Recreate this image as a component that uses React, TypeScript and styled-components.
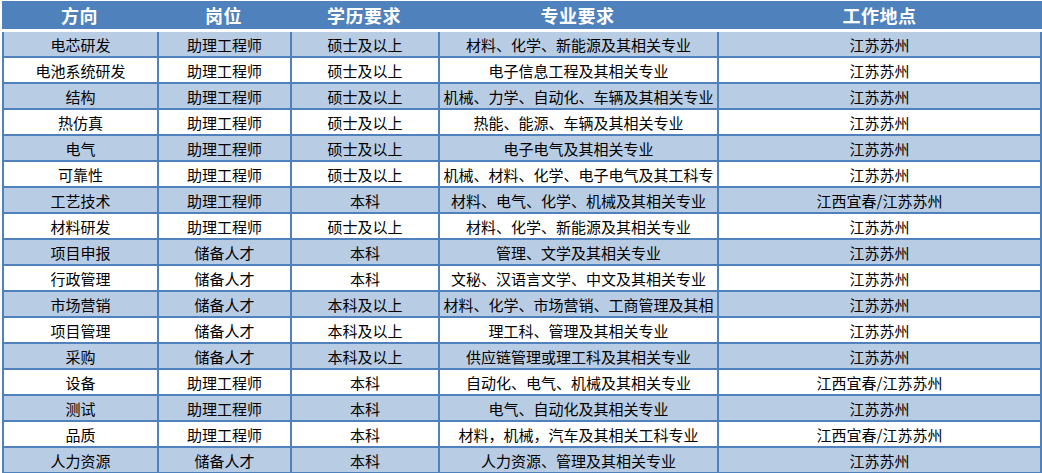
import React from "react";
import styled, { createGlobalStyle } from "styled-components";

const GlobalStyle = createGlobalStyle`
  html, body { margin: 0; padding: 0; background: #ffffff; }
  body { font-family: "Noto Sans CJK SC", "Noto Sans", sans-serif; }
  * { box-sizing: border-box; }
`;

const COLS = "155px 133px 148px 279px 325px";
const BORDER = "#4F81BD";

const Sheet = styled.div`
  width: 1042px;
  padding: 1px 0 0 2px;
  display: flex;
  flex-direction: column;
`;

const HeaderRow = styled.div`
  display: grid;
  grid-template-columns: ${COLS};
  height: 28px;
  background: #4f81bd;
  margin-bottom: 3px;
`;

const HeaderCell = styled.div`
  display: flex;
  align-items: center;
  justify-content: center;
  color: #ffffff;
  font-weight: 700;
  font-size: 18px;
  letter-spacing: 0.5px;
  white-space: nowrap;
`;

const Row = styled.div<{ $shaded: boolean }>`
  display: grid;
  grid-template-columns: ${COLS};
  height: 26px;
  background: ${(p) => (p.$shaded ? "#B8CCE4" : "#ffffff")};
`;

const Cell = styled.div<{ $last?: boolean }>`
  display: flex;
  align-items: center;
  justify-content: center;
  border-left: 2px solid ${BORDER};
  border-bottom: 2px solid ${BORDER};
  border-right: ${(p) => (p.$last ? `2px solid ${BORDER}` : "none")};
  color: #000000;
  font-size: 15px;
  white-space: nowrap;
  overflow: hidden;
  padding-top: 1px;
`;

const headers = ["方向", "岗位", "学历要求", "专业要求", "工作地点"];

const rows: string[][] = [
  ["电芯研发", "助理工程师", "硕士及以上", "材料、化学、新能源及其相关专业", "江苏苏州"],
  ["电池系统研发", "助理工程师", "硕士及以上", "电子信息工程及其相关专业", "江苏苏州"],
  ["结构", "助理工程师", "硕士及以上", "机械、力学、自动化、车辆及其相关专业", "江苏苏州"],
  ["热仿真", "助理工程师", "硕士及以上", "热能、能源、车辆及其相关专业", "江苏苏州"],
  ["电气", "助理工程师", "硕士及以上", "电子电气及其相关专业", "江苏苏州"],
  ["可靠性", "助理工程师", "硕士及以上", "机械、材料、化学、电子电气及其工科专", "江苏苏州"],
  ["工艺技术", "助理工程师", "本科", "材料、电气、化学、机械及其相关专业", "江西宜春/江苏苏州"],
  ["材料研发", "助理工程师", "硕士及以上", "材料、化学、新能源及其相关专业", "江苏苏州"],
  ["项目申报", "储备人才", "本科", "管理、文学及其相关专业", "江苏苏州"],
  ["行政管理", "储备人才", "本科", "文秘、汉语言文学、中文及其相关专业", "江苏苏州"],
  ["市场营销", "储备人才", "本科及以上", "材料、化学、市场营销、工商管理及其相", "江苏苏州"],
  ["项目管理", "储备人才", "本科及以上", "理工科、管理及其相关专业", "江苏苏州"],
  ["采购", "储备人才", "本科及以上", "供应链管理或理工科及其相关专业", "江苏苏州"],
  ["设备", "助理工程师", "本科", "自动化、电气、机械及其相关专业", "江西宜春/江苏苏州"],
  ["测试", "助理工程师", "本科", "电气、自动化及其相关专业", "江苏苏州"],
  ["品质", "助理工程师", "本科", "材料，机械，汽车及其相关工科专业", "江西宜春/江苏苏州"],
  ["人力资源", "储备人才", "本科", "人力资源、管理及其相关专业", "江苏苏州"],
];

export default function App() {
  return (
    <>
      <GlobalStyle />
      <Sheet>
        <HeaderRow>
          {headers.map((h) => (
            <HeaderCell key={h}>{h}</HeaderCell>
          ))}
        </HeaderRow>
        {rows.map((r, i) => (
          <Row key={i} $shaded={i % 2 === 0}>
            {r.map((c, j) => (
              <Cell key={j} $last={j === r.length - 1}>
                {c}
              </Cell>
            ))}
          </Row>
        ))}
      </Sheet>
    </>
  );
}
